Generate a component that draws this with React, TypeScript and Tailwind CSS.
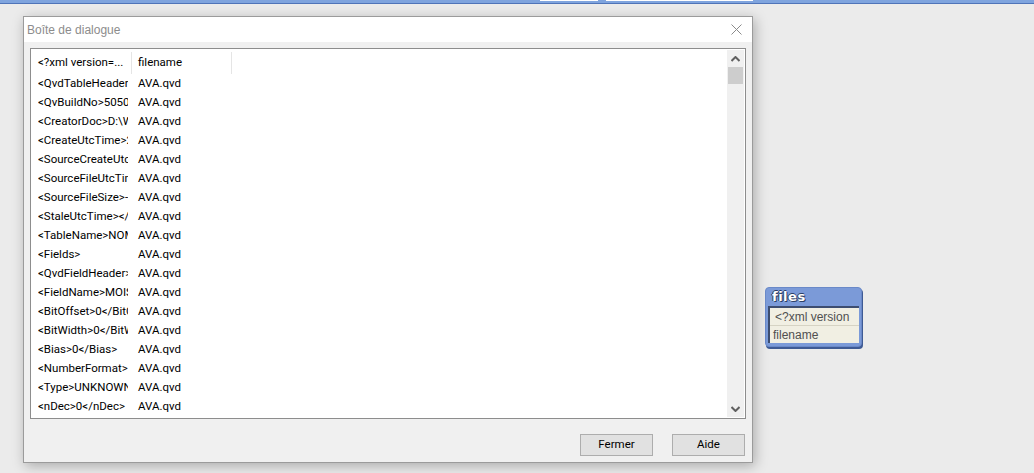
const rows: string[] = [
  "<QvdTableHeader>",
  "<QvBuildNo>50500</QvBuildNo>",
  "<CreatorDoc>D:\\WORK\\AVA.qvw",
  "<CreateUtcTime>2019-01-01",
  "<SourceCreateUtcTime>",
  "<SourceFileUtcTime>",
  "<SourceFileSize>-1</SourceFileSize>",
  "<StaleUtcTime></StaleUtcTime>",
  "<TableName>NOM</TableName>",
  "<Fields>",
  "<QvdFieldHeader>",
  "<FieldName>MOIS</FieldName>",
  "<BitOffset>0</BitOffset>",
  "<BitWidth>0</BitWidth>",
  "<Bias>0</Bias>",
  "<NumberFormat>",
  "<Type>UNKNOWN</Type>",
  "<nDec>0</nDec>",
];

const App = (): React.ReactElement => {
  return (
    <div
      className="relative w-[1034px] h-[473px] bg-[#ebebeb] overflow-hidden"
      style={{ fontFamily: 'Roboto, "Liberation Sans", Arial, sans-serif' }}
    >
      {/* top strip */}
      <div className="h-[4px] bg-[#7fa4de] border-b border-[#4f74b8] flex">
        <div className="ml-[540px] w-[58px] h-[1px] bg-white" />
        <div className="ml-[8px] w-[147px] h-[1px] bg-white" />
      </div>

      {/* dialog */}
      <div className="ml-[23px] mt-[12px] w-[730px] h-[447px] border border-[#9b9b9b] bg-[#f0f0f0] flex flex-col shadow-[2px_3px_12px_rgba(0,0,0,0.28)]">
        <div className="h-[25px] bg-white flex items-center justify-between pl-[3px] pr-[10px] shrink-0">
          <span
            className="text-[12px] text-[#8c8c8c]"
            style={{ fontFamily: '"Liberation Sans", Arial, sans-serif' }}
          >
            Boîte de dialogue
          </span>
          <svg width="11" height="11" viewBox="0 0 11 11">
            <path d="M0.5 0.5 L10.5 10.5 M10.5 0.5 L0.5 10.5" stroke="#8a8a8a" strokeWidth="1" />
          </svg>
        </div>

        <div className="flex-1 flex flex-col px-[6px] pt-[6px] pb-[6px]">
          <div className="h-[371px] w-[716px] border border-[#8d8d8d] bg-white flex text-[11.5px] text-black">
            <div className="flex-1 flex flex-col pt-[3px]">
              {/* header */}
              <div className="flex h-[22px] items-center">
                <div className="w-[101px] h-full flex items-center pl-[7px] border-r border-[#e5e5e5] overflow-hidden whitespace-nowrap">
                  {"<?xml version=..."}
                </div>
                <div className="w-[100px] h-full flex items-center pl-[6px] border-r border-[#e5e5e5]">
                  filename
                </div>
              </div>
              {rows.map((r, i) => (
                <div key={i} className="flex h-[19px] items-center">
                  <div className="w-[101px] pl-[7px] pr-[4px]">
                    <div className="overflow-hidden whitespace-nowrap">{r}</div>
                  </div>
                  <div className="w-[100px] pl-[6px]">AVA.qvd</div>
                </div>
              ))}
            </div>
            {/* scrollbar */}
            <div className="w-[17px] my-[1px] mr-[1px] bg-[#f0f0f0] flex flex-col items-center">
              <div className="h-[17px] w-full flex items-center justify-center">
                <svg width="9" height="6" viewBox="0 0 9 6">
                  <path d="M0.5 5 L4.5 1 L8.5 5" stroke="#606060" strokeWidth="2" fill="none" />
                </svg>
              </div>
              <div className="h-[17px] w-[15px] bg-[#cdcdcd]" />
              <div className="flex-1" />
              <div className="h-[17px] w-full flex items-center justify-center">
                <svg width="9" height="6" viewBox="0 0 9 6">
                  <path d="M0.5 1 L4.5 5 L8.5 1" stroke="#606060" strokeWidth="2" fill="none" />
                </svg>
              </div>
            </div>
          </div>

          <div className="flex justify-end mt-[15px] gap-[19px] pr-[1px]">
            <button className="w-[73px] h-[22px] bg-[#e1e1e1] border border-[#adadad] text-[11.5px] text-black">
              Fermer
            </button>
            <button className="w-[73px] h-[22px] bg-[#e1e1e1] border border-[#adadad] text-[11.5px] text-black">
              Aide
            </button>
          </div>
        </div>
      </div>

      {/* table node on canvas */}
      <div
        className="absolute left-[765px] top-[287px] w-[97px] rounded-[4px] bg-[#7b9ad8] border border-[#6a89c8] shadow-[1px_2px_0_#3e5a94] px-[2px] pb-[3px]"
        style={{ fontFamily: '"DejaVu Sans", Verdana, sans-serif' }}
      >
        <div
          className="h-[18px] flex items-center pl-[4px] text-[13px] font-bold text-white tracking-[0.5px]"
          style={{ textShadow: "1px 1px 0 #2c3f66, -1px 0 0 #2c3f66, 0 -1px 0 #2c3f66" }}
        >
          files
        </div>
        <div
          className="border-l-2 border-t-2 border-[#3d4d70] bg-[#f1efe3] text-[12px] text-[#505050]"
          style={{ fontFamily: '"Liberation Sans", Arial, sans-serif' }}
        >
          <div className="h-[18px] flex items-center pl-[5px] border-b border-[#d6d3c4] whitespace-nowrap overflow-hidden">
            {"<?xml version"}
          </div>
          <div className="h-[17px] flex items-center pl-[3px]">filename</div>
        </div>
      </div>
    </div>
  );
};

export default App;
